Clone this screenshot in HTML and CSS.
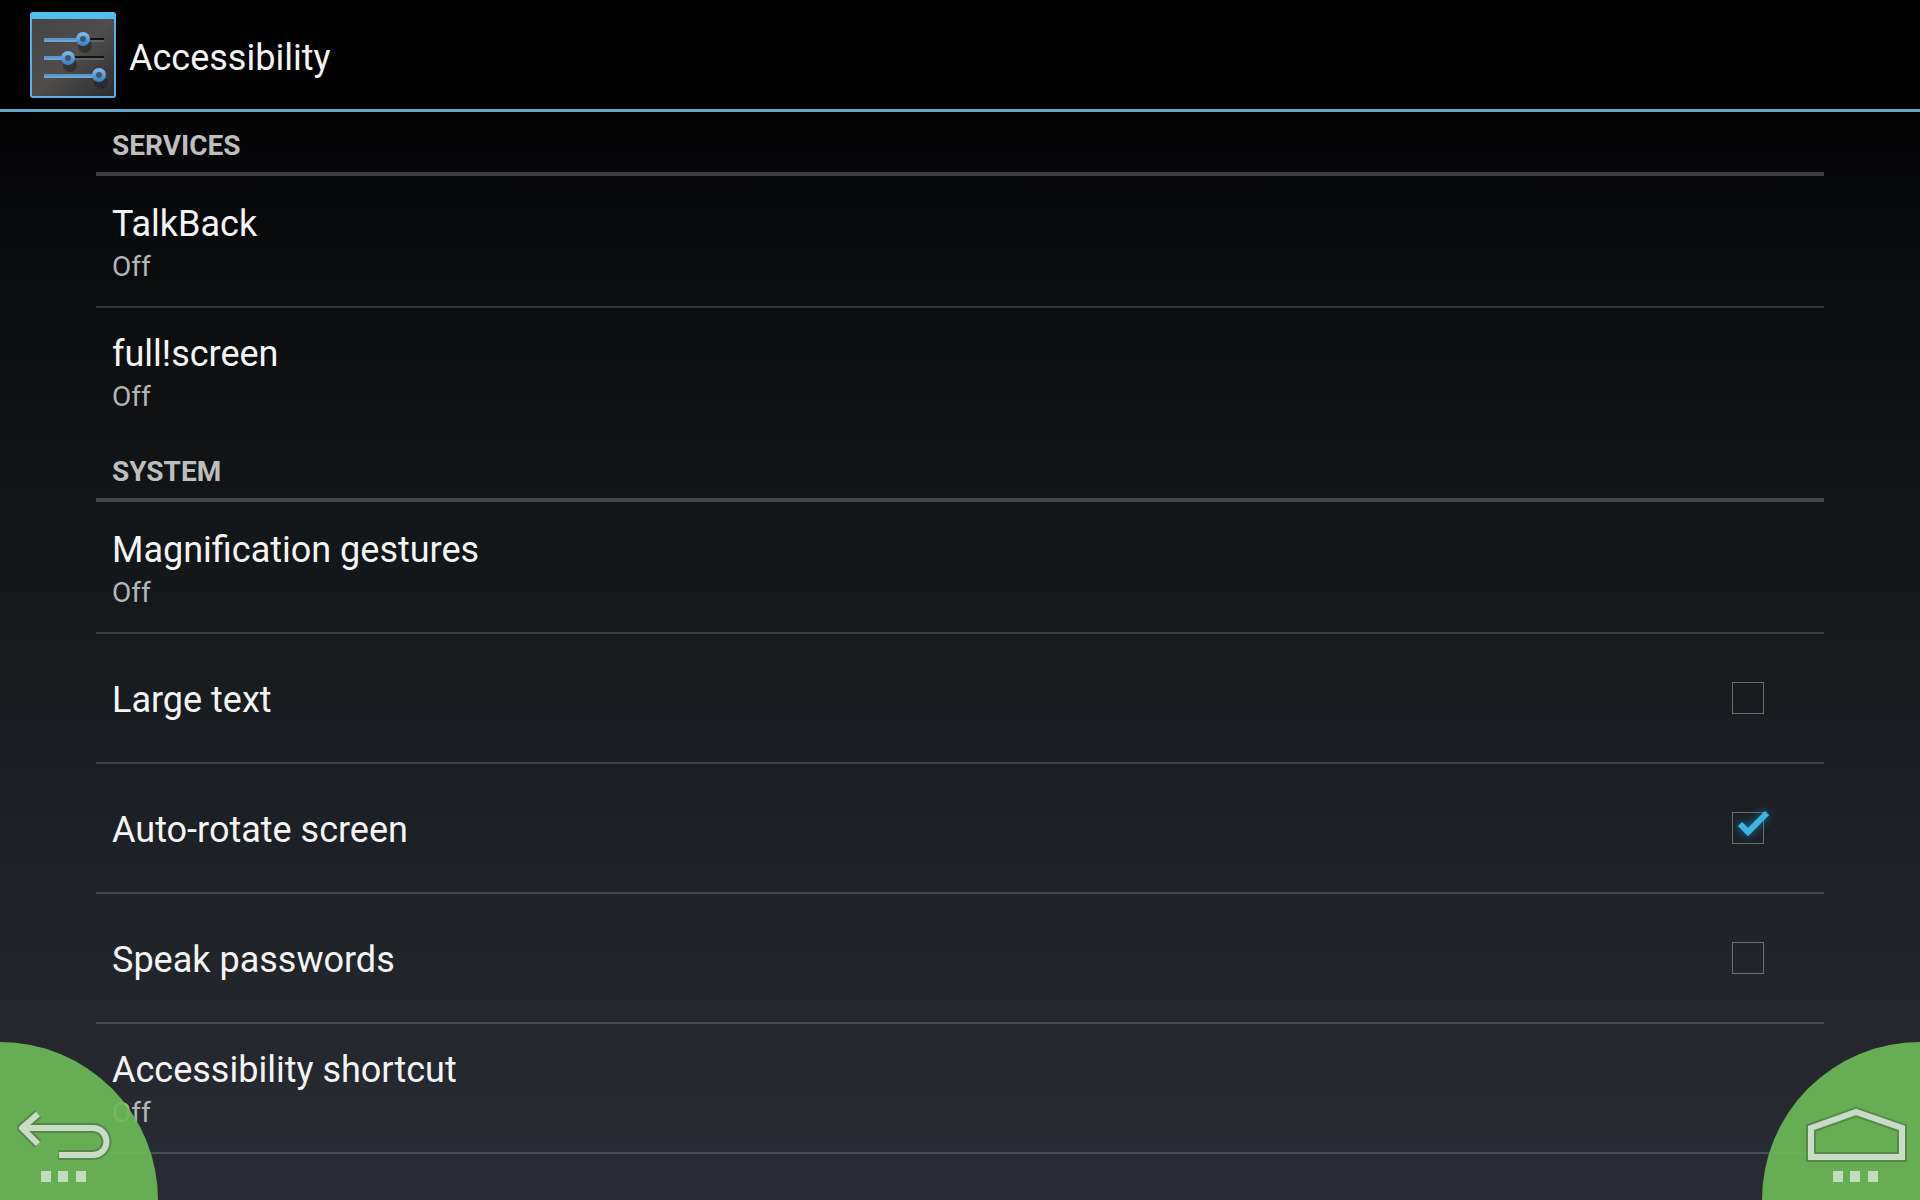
FILE: index.html
```html
<!DOCTYPE html>
<html lang="en">
<head>
    <meta charset="UTF-8">
    <meta name="viewport" content="width=device-width, initial-scale=1.0">
    <title>Accessibility</title>
    <link rel="stylesheet" href="styles.css">
</head>
<body>
    <header class="action-bar">
        <svg class="app-icon" viewBox="0 0 88 88" aria-hidden="true">
            <defs>
                <linearGradient id="panel" x1="0" y1="0" x2="1" y2="1">
                    <stop offset="0" stop-color="#434446"/>
                    <stop offset="0.5" stop-color="#504d4b"/>
                    <stop offset="1" stop-color="#2b2d30"/>
                </linearGradient>
                <linearGradient id="frame" x1="0" y1="0" x2="0" y2="1">
                    <stop offset="0" stop-color="#4fc4f0"/>
                    <stop offset="0.2" stop-color="#62a8d8"/>
                    <stop offset="1" stop-color="#5bb0ea"/>
                </linearGradient>
                <linearGradient id="knob" x1="0" y1="0" x2="0" y2="1">
                    <stop offset="0" stop-color="#7cb6e4"/>
                    <stop offset="1" stop-color="#3f86c8"/>
                </linearGradient>
            </defs>
            <rect x="1" y="1" width="86" height="86" rx="3" fill="url(#frame)"/>
            <rect x="3" y="8" width="82" height="77" fill="url(#panel)"/>
            <g fill="#222426" opacity="0.6">
                <circle cx="56" cy="35" r="7"/>
                <circle cx="41" cy="54" r="7"/>
                <circle cx="72" cy="71" r="7"/>
            </g>
            <path d="M55 28H75M40 46H75" stroke="#111316" stroke-width="2"/>
            <path d="M55 30H75M40 48H75" stroke="#5f7f98" stroke-width="1"/>
            <path d="M15 29H52M15 47H37M15 65H68" stroke="#5795cc" stroke-width="4"/>
            <path d="M15 30H50M15 48H35M15 66H66" stroke="#86b4da" stroke-width="1"/>
            <g fill="#3e566e" stroke="url(#knob)" stroke-width="4">
                <circle cx="54" cy="28" r="5"/>
                <circle cx="39" cy="47" r="5"/>
                <circle cx="70" cy="64" r="5"/>
            </g>
        </svg>
        <h1 class="title">Accessibility</h1>
    </header>

    <main class="settings">
        <!-- Services -->
        <section class="group">
            <h2 class="category">SERVICES</h2>
            <button type="button" class="row">
                <span class="text">
                    <span class="name">TalkBack</span>
                    <span class="summary">Off</span>
                </span>
            </button>
            <button type="button" class="row">
                <span class="text">
                    <span class="name">full!screen</span>
                    <span class="summary">Off</span>
                </span>
            </button>
        </section>

        <!-- System -->
        <section class="group">
            <h2 class="category">SYSTEM</h2>
            <button type="button" class="row">
                <span class="text">
                    <span class="name">Magnification gestures</span>
                    <span class="summary">Off</span>
                </span>
            </button>
            <label class="row" for="largeText">
                <span class="text"><span class="name">Large text</span></span>
                <input type="checkbox" class="check" id="largeText">
            </label>
            <label class="row" for="autoRotate">
                <span class="text"><span class="name">Auto-rotate screen</span></span>
                <span class="check-wrap">
                    <input type="checkbox" class="check" id="autoRotate" checked>
                    <svg class="tick" viewBox="0 0 44 44" aria-hidden="true">
                        <path d="M8 18L16 26L35 7" fill="none" stroke="#3fb4e0" stroke-width="6"/>
                    </svg>
                </span>
            </label>
            <label class="row" for="speakPasswords">
                <span class="text"><span class="name">Speak passwords</span></span>
                <input type="checkbox" class="check" id="speakPasswords">
            </label>
            <button type="button" class="row row-last">
                <span class="text">
                    <span class="name">Accessibility shortcut</span>
                    <span class="summary">Off</span>
                </span>
            </button>
        </section>
    </main>

    <!-- Corner buttons over the list -->
    <button type="button" class="corner corner-left" aria-label="Back">
        <svg viewBox="0 0 158 158" aria-hidden="true">
            <g fill="none" stroke-linejoin="round">
                <path class="edge" d="M38 72L22 86L38 102M23 86H93A13 13 0 0 1 93 113H58"/>
                <path class="line" d="M38 72L22 86L38 102M23 86H93A13 13 0 0 1 93 113H59"/>
            </g>
            <path class="dots" d="M41 129h10v11h-10zM58 129h10v11h-10zM76 129h10v11h-10z"/>
        </svg>
    </button>
    <button type="button" class="corner corner-right" aria-label="Home">
        <svg viewBox="0 0 158 158" aria-hidden="true">
            <g fill="none">
                <path class="edge" d="M49 115V86L94 70L140 86V115Z"/>
                <path class="line" d="M49 115V86L94 70L140 86V115Z"/>
            </g>
            <path class="dots" d="M71 129h10v11h-10zM88 129h10v11h-10zM106 129h10v11h-10z"/>
        </svg>
    </button>
</body>
</html>
```

FILE: styles.css
```css
* {
    box-sizing: border-box;
}
body {
    margin: 0;
    min-height: 100vh;
    font-family: Roboto, "Liberation Sans", sans-serif;
    color: #f4f4f4;
    background: linear-gradient(#000 0%, #030304 9%, #08090b 18%, #111315 38%, #1b1f23 65%, #24282d 86%, #292c35 100%);
}
h1, h2 {
    margin: 0;
}
.action-bar {
    display: flex;
    align-items: center;
    gap: 12px;
    height: 112px;
    padding: 0 29px;
    background: #010102;
    border-bottom: 3px solid #62a5c8;
}
.app-icon {
    width: 88px;
    height: 88px;
}
.title {
    padding-top: 6px;
    font-size: 36px;
    font-weight: 400;
    line-height: 42px;
}
.settings {
    margin: 0 5%;
}
.category {
    height: 64px;
    padding: 16px 16px 0;
    border-bottom: 4px solid rgba(255, 255, 255, 0.22);
    font-size: 28px;
    font-weight: 700;
    line-height: 36px;
    color: #bebebe;
}
.group + .group {
    margin-top: 2px;
}
.row {
    display: flex;
    align-items: center;
    justify-content: space-between;
    width: 100%;
    height: 130px;
    padding: 0 60px 0 16px;
    border: 0;
    border-top: 2px solid rgba(255, 255, 255, 0.16);
    background: none;
    color: inherit;
    font-family: inherit;
    text-align: left;
}
.category + .row {
    border-top-color: transparent;
}
.row-last {
    height: 132px;
    border-bottom: 2px solid rgba(255, 255, 255, 0.16);
}
.text {
    display: flex;
    flex-direction: column;
    padding-top: 4px;
}
.name {
    font-size: 36px;
    line-height: 42px;
}
.summary {
    padding-top: 4px;
    font-size: 28px;
    line-height: 36px;
    color: #b4b5b6;
}
.check-wrap {
    position: relative;
    display: flex;
}
.check {
    appearance: none;
    width: 32px;
    height: 32px;
    margin: 0;
    border: 1px solid #6a6c6e;
}
.tick {
    position: absolute;
    left: 0;
    top: -6px;
    width: 44px;
    height: 44px;
    filter: drop-shadow(0 0 4px #0a7fb0);
}
.check:not(:checked) + .tick {
    display: none;
}
.corner {
    position: fixed;
    bottom: 0;
    width: 158px;
    height: 158px;
    padding: 0;
    border: 0;
    background: rgba(109, 185, 87, 0.92);
}
.corner svg {
    display: block;
}
.corner-left {
    left: 0;
    border-top-right-radius: 100%;
}
.corner-right {
    right: 0;
    border-top-left-radius: 100%;
}
.edge {
    stroke: #50794a;
    stroke-width: 10;
    opacity: 0.7;
}
.line {
    stroke: #c9dcc6;
    stroke-width: 6;
}
.dots {
    fill: #c3dcbd;
}
```
